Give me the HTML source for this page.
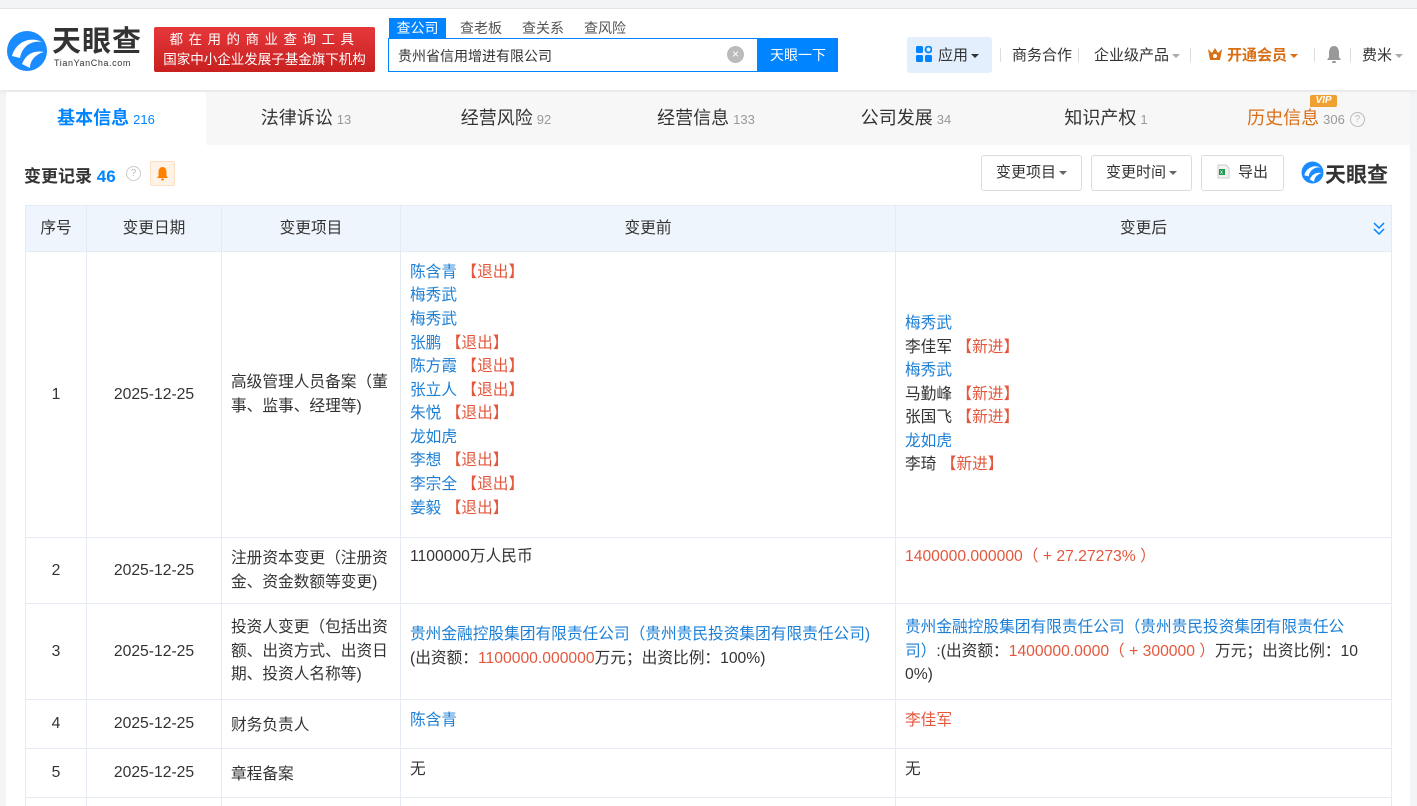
<!DOCTYPE html>
<html><head><meta charset="utf-8">
<style>
*{margin:0;padding:0;box-sizing:border-box}
html{width:1417px;height:806px;overflow:hidden}
body{width:1417px;height:806px;overflow:hidden;background:#f3f4f6;font-family:"Liberation Sans","Noto Sans CJK SC",sans-serif;color:#333;position:relative}
.abs{position:absolute}
.hdr{left:0;top:8px;width:1417px;height:82px;background:#fff;border-top:1px solid #e6e6e6;box-shadow:0 2px 4px rgba(0,0,0,.06)}
.blue{color:#0084ff}
.lk{color:#1c7fd6}
.red{color:#e4573d}
.tabs{left:6px;top:92px;width:1404px;height:53px;background:#f7f7f7}
.tab{position:absolute;top:0;height:53px;width:200px;text-align:center;line-height:53px;font-size:18px;color:#333}
.tab small{font-size:13px;color:#999;margin-left:4px}
.panel{left:6px;top:145px;width:1404px;height:661px;background:#fff}
.wrap{position:absolute;left:0;top:0;width:1417px;height:806px;overflow:hidden}
table{position:absolute;left:25px;top:205px;border-collapse:collapse;font-size:15.7px;table-layout:fixed}
td,th{border:1px solid #e4ebf3;vertical-align:middle;line-height:23.6px;color:#333;font-weight:normal}
th{background:#eef5fc;height:46px;font-size:15.7px}
td.c{text-align:center}
td.t{padding:0 9px}
.btn{position:absolute;top:155px;height:36px;border:1px solid #dcdcdc;border-radius:3px;font-size:15px;line-height:34px;text-align:center;color:#333;background:#fff}
.car{display:inline-block;width:0;height:0;border-left:4px solid transparent;border-right:4px solid transparent;border-top:4px solid #666;vertical-align:middle;margin-left:3px}
.nav{top:44px;font-size:15px;color:#333}
</style></head><body><div class="wrap">
<div class="abs hdr"></div>
<svg class="abs" style="left:6px;top:30px" width="42" height="42" viewBox="0 0 42 42">
<circle cx="21" cy="21" r="20" fill="#1a8cff"/>
<path d="M6 26 C10 12 24 6 36 12 C26 10 16 16 14 28 Z" fill="#fff"/>
<path d="M16 34 C20 24 28 20 38 22 C30 24 24 30 24 38 Z" fill="#fff"/>
</svg>
<div class="abs" style="left:52px;top:27px;font-size:29px;line-height:30px;font-weight:bold;color:#333;letter-spacing:1px">天眼查</div>
<div class="abs" style="left:54px;top:58px;font-size:9px;line-height:10px;color:#333;letter-spacing:.6px">TianYanCha.com</div>
<div class="abs" style="left:154px;top:27px;width:221px;height:45px;background:linear-gradient(#e5383b,#c8201f);border-radius:2px;color:#fff;font-size:13.5px;text-align:center;line-height:20px;padding-top:3px">
<div style="letter-spacing:5.5px">都在用的商业查询工具</div><div>国家中小企业发展子基金旗下机构</div></div>
<div class="abs" style="left:389px;top:18px;width:57px;height:21px;background:#0084ff;color:#fff;font-size:14px;text-align:center;line-height:20px">查公司</div>
<div class="abs" style="left:460px;top:18px;font-size:14px;color:#555;line-height:20px">查老板</div>
<div class="abs" style="left:522px;top:18px;font-size:14px;color:#555;line-height:20px">查关系</div>
<div class="abs" style="left:584px;top:18px;font-size:14px;color:#555;line-height:20px">查风险</div>
<div class="abs" style="left:388px;top:38px;width:370px;height:34px;border:1px solid #0084ff;background:#fff"></div>
<div class="abs" style="left:398px;top:46px;font-size:14px;color:#333">贵州省信用增进有限公司</div>
<div class="abs" style="left:727px;top:46px;width:17px;height:17px;border-radius:50%;background:#bbb;color:#fff;font-size:12px;text-align:center;line-height:17px">×</div>
<div class="abs" style="left:758px;top:38px;width:80px;height:34px;background:#0084ff;color:#fff;font-size:14px;text-align:center;line-height:34px">天眼一下</div>
<div class="abs" style="left:907px;top:37px;width:85px;height:36px;background:#e3effd;border-radius:3px"></div>
<svg class="abs" style="left:916px;top:46px" width="16" height="16"><rect x="0" y="0" width="7" height="7" rx="1.5" fill="#0084ff"/><rect x="9.5" y="0.5" width="6" height="6" rx="3" fill="none" stroke="#0084ff" stroke-width="1.8"/><rect x="0" y="9" width="7" height="7" rx="1.5" fill="#0084ff"/><rect x="9" y="9" width="7" height="7" rx="1.5" fill="#0084ff"/></svg>
<div class="abs nav" style="left:938px">应用<span class="car" style="border-top-color:#333"></span></div>
<div class="abs" style="left:1000px;top:48px;width:1px;height:14px;background:#ddd"></div>
<div class="abs nav" style="left:1012px">商务合作</div>
<div class="abs" style="left:1078px;top:48px;width:1px;height:14px;background:#ddd"></div>
<div class="abs nav" style="left:1094px">企业级产品<span class="car" style="border-top-color:#aaa"></span></div>
<div class="abs" style="left:1190px;top:48px;width:1px;height:14px;background:#ddd"></div>
<svg class="abs" style="left:1207px;top:47px" width="16" height="14"><path d="M1 2 L5 6 L8 1 L11 6 L15 2 L13 13 L3 13 Z" fill="#d86f14"/><circle cx="8" cy="9" r="2" fill="#fff"/></svg>
<div class="abs nav" style="left:1227px;color:#d86f14;font-weight:bold">开通会员<span class="car" style="border-top-color:#d86f14"></span></div>
<div class="abs" style="left:1314px;top:48px;width:1px;height:14px;background:#ddd"></div>
<svg class="abs" style="left:1326px;top:45px" width="16" height="19"><path d="M8 1 C4 1 3 5 3 8 L3 12 L1 15 L15 15 L13 12 L13 8 C13 5 12 1 8 1 Z" fill="#999"/><rect x="6" y="16" width="4" height="2" rx="1" fill="#999"/></svg>
<div class="abs" style="left:1350px;top:48px;width:1px;height:14px;background:#ddd"></div>
<div class="abs nav" style="left:1362px">费米<span class="car" style="border-top-color:#aaa"></span></div>
<div class="abs tabs">
<div class="tab" style="left:0;background:#fff;color:#0084ff;font-weight:bold">基本信息<small style="color:#0084ff;font-weight:normal">216</small></div>
<div class="tab" style="left:200px">法律诉讼<small>13</small></div>
<div class="tab" style="left:400px">经营风险<small>92</small></div>
<div class="tab" style="left:600px">经营信息<small>133</small></div>
<div class="tab" style="left:800px">公司发展<small>34</small></div>
<div class="tab" style="left:1000px">知识产权<small>1</small></div>
<div class="tab" style="left:1200px;color:#d86f14">历史信息<small>306</small> <span style="display:inline-block;width:15px;height:15px;border:1px solid #bbb;border-radius:50%;font-size:10px;line-height:13px;color:#bbb;vertical-align:middle">?</span></div>
<div class="abs" style="left:1304px;top:3px;width:27px;height:12px;background:#f0a030;color:#fff;font-size:10px;font-weight:bold;font-style:italic;line-height:12px;text-align:center;border-radius:2px 2px 2px 0">VIP</div>
</div>
<div class="abs panel"></div>
<div class="abs" style="left:24px;top:162px;font-size:17px;font-weight:bold;color:#333">变更记录 <span class="blue">46</span></div>
<div class="abs" style="left:126px;top:166px;width:15px;height:15px;border:1px solid #ccc;border-radius:50%;font-size:10px;line-height:13px;text-align:center;color:#bbb">?</div>
<div class="abs" style="left:150px;top:161px;width:25px;height:25px;background:#fff2e6;border:1px solid #fde0c4;border-radius:2px"></div>
<svg class="abs" style="left:156px;top:166px" width="13" height="15"><path d="M6.5 1 C3.5 1 2.5 4 2.5 6 L2.5 10 L1 12 L12 12 L10.5 10 L10.5 6 C10.5 4 9.5 1 6.5 1Z" fill="#ff8000"/><rect x="5" y="12.5" width="3" height="2" rx="1" fill="#ff8000"/></svg>
<div class="btn" style="left:981px;width:101px">变更项目<span class="car"></span></div>
<div class="btn" style="left:1091px;width:101px">变更时间<span class="car"></span></div>
<div class="btn" style="left:1201px;width:83px"><svg width="13" height="15" style="vertical-align:-2px;margin-right:8px"><path d="M1 1 H9 L12 4 V14 H1 Z" fill="#f3f3f3" stroke="#ccc"/><rect x="2" y="5" width="6" height="6" fill="#1f9b50"/><text x="3" y="10" font-size="6" fill="#fff" font-family="Liberation Sans">x</text></svg>导出</div>
<svg class="abs" style="left:1301px;top:161px" width="23" height="23" viewBox="0 0 42 42"><circle cx="21" cy="21" r="20" fill="#1a8cff"/><path d="M6 26 C10 12 24 6 36 12 C26 10 16 16 14 28 Z" fill="#fff"/><path d="M16 34 C20 24 28 20 38 22 C30 24 24 30 24 38 Z" fill="#fff"/></svg>
<div class="abs" style="left:1325px;top:159px;font-size:21px;font-weight:bold;color:#333">天眼查</div>

<table>
<colgroup><col style="width:61px"><col style="width:135px"><col style="width:179px"><col style="width:495px"><col style="width:496px"></colgroup>
<tr><th>序号</th><th>变更日期</th><th>变更项目</th><th>变更前</th><th style="position:relative">变更后<svg style="position:absolute;right:5px;top:14px" width="14" height="16"><path d="M2 3 L7 8 L12 3 M2 9 L7 14 L12 9" fill="none" stroke="#0084ff" stroke-width="1.5"/></svg></th></tr>
<tr style="height:286px"><td class="c">1</td><td class="c">2025-12-25</td><td class="t">高级管理人员备案（董事、监事、经理等)</td>
<td class="t" style="padding-top:0;position:relative;top:-4px"><span class="lk">陈含青</span> <span class="red">【退出】</span><br><span class="lk">梅秀武</span><br><span class="lk">梅秀武</span><br><span class="lk">张鹏</span> <span class="red">【退出】</span><br><span class="lk">陈方霞</span> <span class="red">【退出】</span><br><span class="lk">张立人</span> <span class="red">【退出】</span><br><span class="lk">朱悦</span> <span class="red">【退出】</span><br><span class="lk">龙如虎</span><br><span class="lk">李想</span> <span class="red">【退出】</span><br><span class="lk">李宗全</span> <span class="red">【退出】</span><br><span class="lk">姜毅</span> <span class="red">【退出】</span></td>
<td class="t"><span class="lk">梅秀武</span><br>李佳军 <span class="red">【新进】</span><br><span class="lk">梅秀武</span><br>马勤峰 <span class="red">【新进】</span><br>张国飞 <span class="red">【新进】</span><br><span class="lk">龙如虎</span><br>李琦 <span class="red">【新进】</span></td></tr>
<tr style="height:66px"><td class="c">2</td><td class="c">2025-12-25</td><td class="t">注册资本变更（注册资金、资金数额等变更)</td><td class="t" style="vertical-align:top;padding-top:7px">1100000万人民币</td><td class="t" style="vertical-align:top;padding-top:7px"><span class="red">1400000.000000（ + 27.27273% ）</span></td></tr>
<tr style="height:96px"><td class="c">3</td><td class="c">2025-12-25</td><td class="t">投资人变更（包括出资额、出资方式、出资日期、投资人名称等)</td><td class="t" style="vertical-align:top;padding-top:19px"><span class="lk">贵州金融控股集团有限责任公司（贵州贵民投资集团有限责任公司)</span><br>(出资额：<span class="red">1100000.000000</span>万元；出资比例：100%)</td><td class="t" style="padding-right:28px;word-break:break-all"><span class="lk">贵州金融控股集团有限责任公司（贵州贵民投资集团有限责任公司）</span>:(出资额：<span class="red">1400000.0000（ + 300000 ）</span>万元；出资比例：100%)</td></tr>
<tr style="height:49px"><td class="c">4</td><td class="c">2025-12-25</td><td class="t"><span style="position:relative;top:2px">财务负责人</span></td><td class="t" style="vertical-align:top;padding-top:9px"><span class="lk">陈含青</span></td><td class="t" style="vertical-align:top;padding-top:9px"><span class="red">李佳军</span></td></tr>
<tr style="height:49px"><td class="c">5</td><td class="c">2025-12-25</td><td class="t"><span style="position:relative;top:2px">章程备案</span></td><td class="t" style="vertical-align:top;padding-top:9px">无</td><td class="t" style="vertical-align:top;padding-top:9px">无</td></tr>
<tr style="height:30px"><td></td><td></td><td></td><td></td><td></td></tr>
</table>
</div></body></html>
